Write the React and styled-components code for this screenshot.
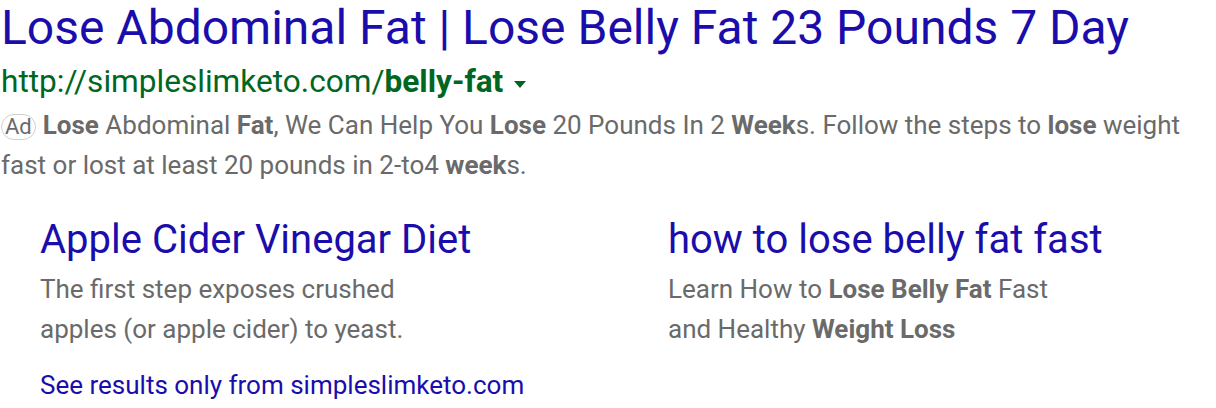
import React from "react";
import styled, { createGlobalStyle } from "styled-components";

const GlobalStyle = createGlobalStyle`
  body {
    margin: 0;
    background: #fff;
    font-family: Roboto, "Liberation Sans", Arial, sans-serif;
  }
`;

const AdResult = () => {
  return (
    <Wrapper>
      <GlobalStyle />
      <Title>Lose Abdominal Fat | Lose Belly Fat 23 Pounds 7 Day</Title>
      <UrlRow>
        http://simpleslimketo.com/<b>belly-fat</b>
        <Caret />
      </UrlRow>
      <Snippet>
        <AdBadge>Ad</AdBadge>
        <b>Lose</b> Abdominal <b>Fat</b>, We Can Help You <b>Lose</b> 20 Pounds In 2{" "}
        <b>Week</b>s. Follow the steps to <b>lose</b> weight fast or lost at least 20
        pounds in 2-to4 <b>week</b>s.
      </Snippet>
      <Sitelinks>
        <Sitelink>
          <LinkTitle>Apple Cider Vinegar Diet</LinkTitle>
          <LinkText>
            The first step exposes crushed
            <br />
            apples (or apple cider) to yeast.
          </LinkText>
        </Sitelink>
        <Sitelink>
          <LinkTitle>how to lose belly fat fast</LinkTitle>
          <LinkText>
            Learn How to <b>Lose Belly Fat</b> Fast
            <br />
            and Healthy <b>Weight Loss</b>
          </LinkText>
        </Sitelink>
      </Sitelinks>
      <MoreLink>See results only from simpleslimketo.com</MoreLink>
    </Wrapper>
  );
};

const Wrapper = styled.div`
  width: 1216px;
  height: 408px;
  overflow: hidden;
  padding-left: 1px;
  box-sizing: border-box;
`;

const Title = styled.div`
  font-size: 48px;
  line-height: 56px;
  color: #1a0dab;
  white-space: nowrap;
`;

const UrlRow = styled.div`
  display: flex;
  align-items: center;
  margin-top: 6px;
  font-size: 31.6px;
  line-height: 40px;
  color: #006621;
  b {
    font-weight: 700;
  }
`;

const Caret = styled.span`
  width: 0;
  height: 0;
  margin-left: 11px;
  margin-top: 4px;
  border-left: 6px solid transparent;
  border-right: 6px solid transparent;
  border-top: 7px solid #006621;
`;

const Snippet = styled.div`
  margin-top: 3px;
  font-size: 26px;
  line-height: 40px;
  color: #6a6a6a;
  width: 1200px;
  b {
    font-weight: 700;
  }
`;

const AdBadge = styled.span`
  display: inline-block;
  box-sizing: border-box;
  height: 26px;
  font-size: 22px;
  line-height: 23px;
  padding: 0 3px;
  border: 1.5px solid #d0d0d0;
  border-radius: 13px;
  color: #6a6a6a;
  margin-right: 7px;
  vertical-align: 0;
`;

const Sitelinks = styled.div`
  display: grid;
  grid-template-columns: 628px 1fr;
  padding-left: 39px;
  margin-top: 29px;
`;

const Sitelink = styled.div`
  display: flex;
  flex-direction: column;
`;

const LinkTitle = styled.div`
  font-size: 40px;
  line-height: 52px;
  color: #1a0dab;
  margin-bottom: 3px;
`;

const LinkText = styled.div`
  font-size: 26px;
  line-height: 40px;
  color: #6a6a6a;
  b {
    font-weight: 700;
  }
`;

const MoreLink = styled.div`
  padding-left: 39px;
  margin-top: 16px;
  font-size: 26px;
  line-height: 40px;
  color: #1a0dab;
`;

export default AdResult;
